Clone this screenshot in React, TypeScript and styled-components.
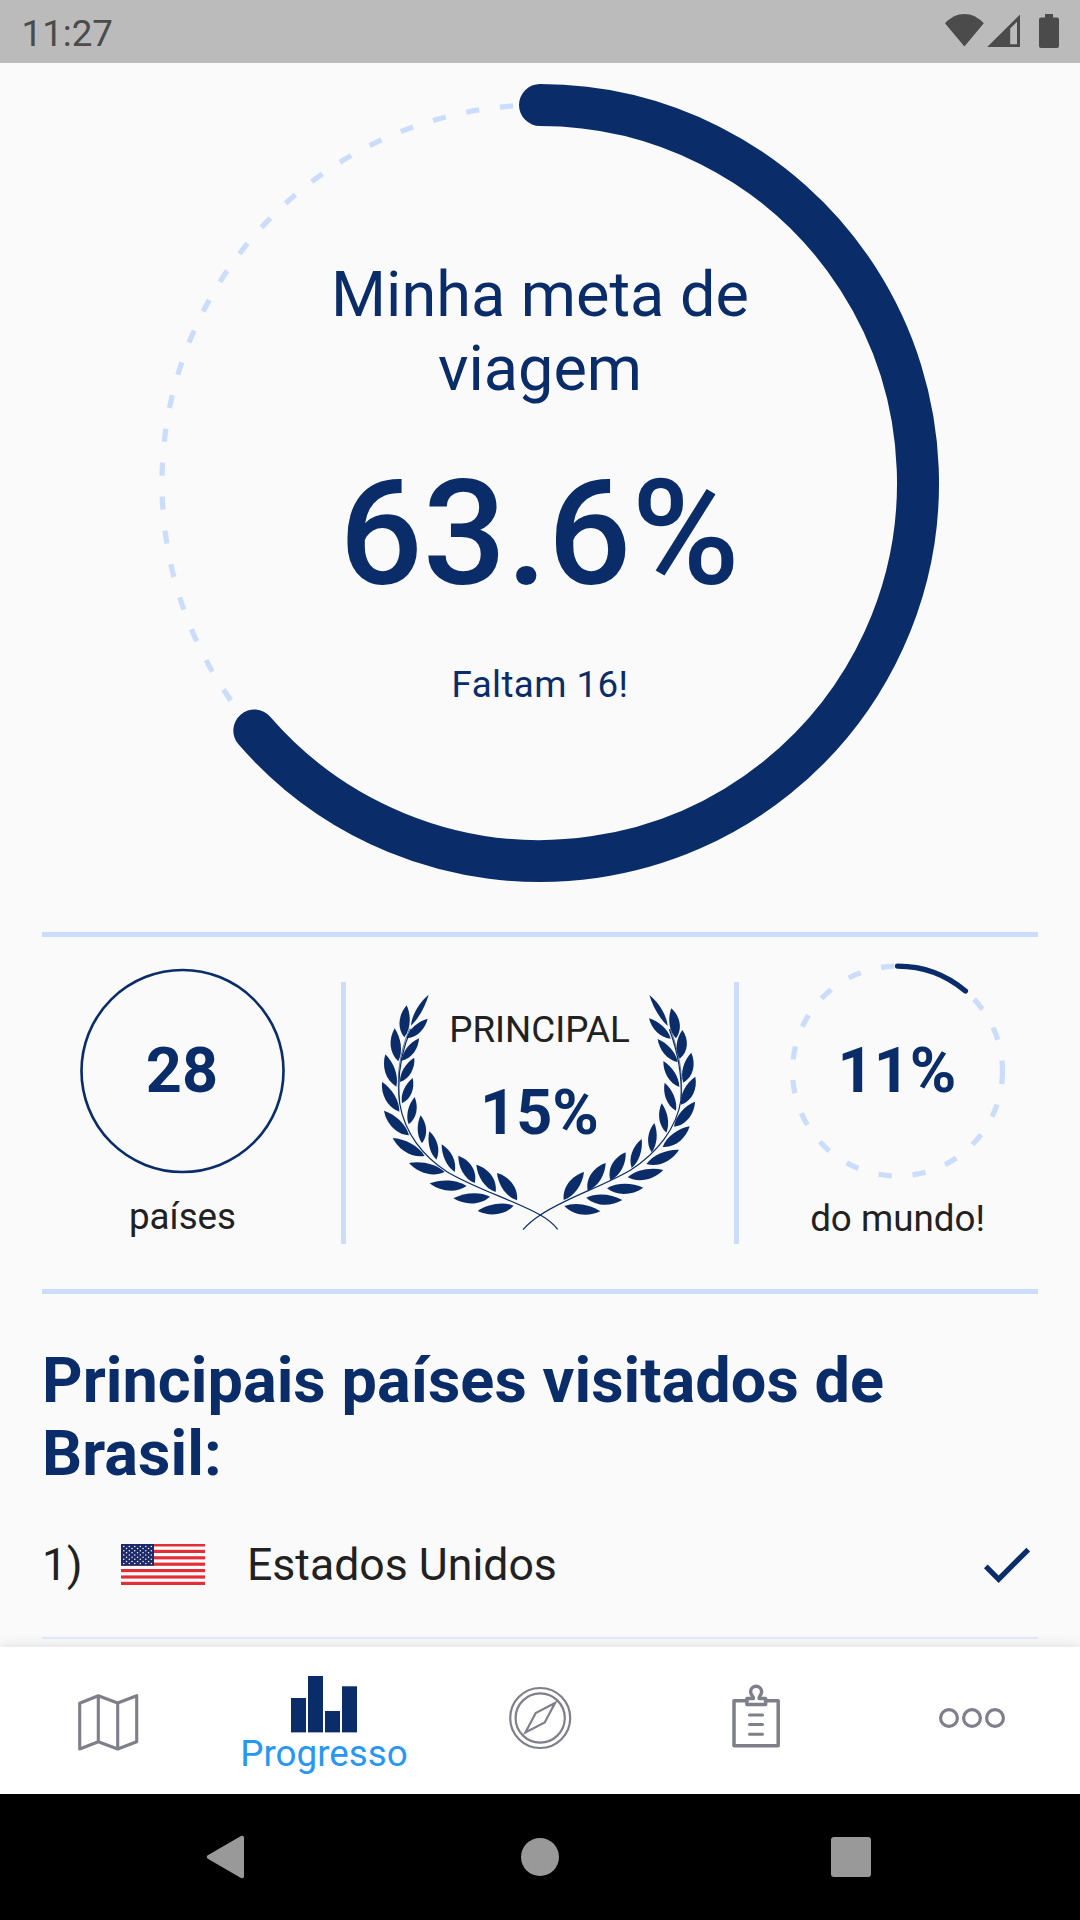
import React from "react";
import styled, { createGlobalStyle } from "styled-components";

const NAVY = "#0a2d69";
const PALE = "#cbddfb";
const INK = "#212121";
const ICON = "#7f7f8b";

const GlobalStyle = createGlobalStyle`
  * { box-sizing: border-box; }
  html, body { margin: 0; padding: 0; }
  body { background: #fafafa; font-family: Roboto, "Liberation Sans", sans-serif; }
  svg { display: block; flex: none; overflow: visible; }
`;

const Screen = styled.div`
  width: 1080px;
  height: 1920px;
  display: flex;
  flex-direction: column;
  overflow: hidden;
  background: #fafafa;
`;

const StatusBar = styled.header`
  height: 63px;
  flex: none;
  display: flex;
  align-items: flex-start;
  justify-content: space-between;
  padding: 12px 21px 0 21.5px;
  background: #bbbbbb;
`;

const StatusIcons = styled.div`
  display: flex;
  padding-top: 2px;
`;

const Content = styled.main`
  flex: 1;
  min-height: 0;
  padding: 21px 42px 0;
  overflow: hidden;
`;

const Label = styled.div<{ $size: number; $line: number; $weight?: number; $color?: string; $spacing?: number }>`
  font-size: ${(p) => p.$size}px;
  line-height: ${(p) => p.$line}px;
  font-weight: ${(p) => p.$weight ?? 400};
  color: ${(p) => p.$color ?? INK};
  letter-spacing: ${(p) => p.$spacing ?? 0}px;
  white-space: nowrap;
`;

const Stack = styled.div<{ $w: number; $h: number }>`
  width: ${(p) => p.$w}px;
  height: ${(p) => p.$h}px;
  display: grid;
  grid-template: 100% / 100%;
  & > * { grid-area: 1 / 1; }
`;

const GoalRing = styled(Stack)`
  margin: 0 auto;
`;

const GoalText = styled.div`
  display: flex;
  flex-direction: column;
  align-items: center;
  text-align: center;
  padding-top: 174px;
`;

const GoalNumber = styled.div`
  padding: 42px 1px 43px 0;
`;

const Rule = styled.div<{ $top: number }>`
  height: 5px;
  margin-top: ${(p) => p.$top}px;
  background: ${PALE};
`;

const Stats = styled.section`
  height: 352px;
  display: flex;
`;

const StatColumn = styled.div<{ $width: number; $top: number }>`
  width: ${(p) => p.$width}px;
  padding-top: ${(p) => p.$top}px;
  display: flex;
  flex-direction: column;
  align-items: center;
`;

const VRule = styled.div<{ $left?: number; $right?: number }>`
  width: 5px;
  height: 262px;
  margin: 45px ${(p) => p.$right ?? 0}px 0 ${(p) => p.$left ?? 0}px;
  background: ${PALE};
`;

const Centered = styled.div`
  display: flex;
  align-items: center;
  justify-content: center;
`;

const StatCaption = styled.div<{ $gap: number }>`
  padding: ${(p) => p.$gap}px 0 0 1px;
`;

const LaurelText = styled.div`
  display: flex;
  flex-direction: column;
  align-items: center;
  gap: 25px;
  padding: 48px 1px 0 0;
`;

const Heading = styled.h2`
  margin: 50px 0 0;
  font-size: 63px;
  line-height: 73px;
  font-weight: 700;
  letter-spacing: 0.04px;
  color: ${NAVY};
`;

const CountryRow = styled.div`
  height: 149px;
  display: flex;
  align-items: center;
  padding-top: 2px;
  border-bottom: 2px solid #e0eafa;
`;

const Rank = styled.div`
  width: 79px;
`;

const CountryName = styled.div`
  flex: 1;
  padding-left: 42px;
`;

const TabBar = styled.nav`
  height: 147px;
  flex: none;
  display: flex;
  background: #ffffff;
  box-shadow: 0 -2px 12px rgba(0, 0, 0, 0.1);
  position: relative;
`;

const Tab = styled.div`
  width: 216px;
  display: flex;
  flex-direction: column;
  align-items: center;
  justify-content: center;
  padding-bottom: 5px;
`;

const ActiveTab = styled(Tab)`
  justify-content: flex-start;
  padding: 29px 0 0;
`;

const SystemBar = styled.footer`
  height: 126px;
  flex: none;
  display: grid;
  grid-template-columns: repeat(3, 312px);
  place-content: center;
  justify-items: center;
  align-items: center;
  background: #000;
`;

type Leaf = [number, number, number, number];

/* tip x, tip y, base x, base y */
const leftOuter: Leaf[] = [
  [140, 136, 133, 232], [104, 205, 115, 304], [76, 283, 109, 380], [66, 366, 118, 455],
  [72, 452, 147, 526], [98, 534, 194, 588], [147, 609, 254, 636], [209, 670, 320, 678],
  [280, 715, 390, 710], [353, 753, 461, 737],
];
const leftInner: Leaf[] = [
  [203, 176, 139, 235], [177, 235, 125, 302], [163, 293, 120, 366], [158, 354, 126, 430],
  [164, 411, 146, 493], [182, 466, 186, 550], [208, 514, 229, 599], [245, 553, 284, 636],
  [295, 587, 344, 669], [349, 614, 407, 696], [411, 639, 471, 721],
];
const rightOuter: Leaf[] = [
  [934, 145, 948, 235], [967, 210, 959, 296], [994, 278, 970, 368], [1006, 350, 963, 434],
  [1005, 425, 942, 500], [989, 499, 908, 561], [957, 569, 859, 612], [910, 630, 803, 652],
  [850, 683, 741, 685], [787, 720, 679, 713], [721, 754, 613, 738],
];
const rightInner: Leaf[] = [
  [867, 175, 932, 236], [893, 237, 953, 306], [910, 303, 958, 381], [914, 368, 948, 452],
  [905, 430, 919, 518], [883, 489, 875, 577], [845, 537, 815, 624], [797, 577, 751, 661],
  [737, 609, 683, 692], [672, 636, 611, 720],
];

/* A pointed leaf; `a` and `b` are how far each edge swells from the mid line. */
function leafPath([tx, ty, bx, by]: Leaf, a: number, b: number) {
  const dx = bx - tx;
  const dy = by - ty;
  const len = Math.hypot(dx, dy);
  const nx = -dy / len;
  const ny = dx / len;
  const at = (t: number, o: number) => `${(tx + dx * t + nx * o).toFixed(1)} ${(ty + dy * t + ny * o).toFixed(1)}`;
  return `M${tx} ${ty}C${at(0.3, a * 1.05)} ${at(0.72, a * 1.2)} ${bx} ${by}C${at(0.72, -b * 1.2)} ${at(0.3, -b * 1.05)} ${tx} ${ty}Z`;
}

function Laurel() {
  return (
    <svg width="360" height="290" viewBox="0 0 1080 870" fill={NAVY}>
      <path d={leafPath([206, 104, 153, 197], 12, 8)} />
      <path d={leafPath([868, 105, 923, 198], 8, 12)} />
      {leftOuter.map((l, i) => <path key={"lo" + i} d={leafPath(l, 21, 15)} />)}
      {leftInner.map((l, i) => <path key={"li" + i} d={leafPath(l, i > 7 ? 17 : 13, i > 7 ? 22 : 17)} />)}
      {rightOuter.map((l, i) => <path key={"ro" + i} d={leafPath(l, 15, 21)} />)}
      {rightInner.map((l, i) => <path key={"ri" + i} d={leafPath(l, i > 6 ? 22 : 17, i > 6 ? 17 : 13)} />)}
      <g fill="none" stroke={NAVY} strokeLinecap="butt">
        <path d="M149 206C118 280 108 352 119 430" strokeWidth="2" />
        <path d="M153 208C119 284 111 352 119 430C134 520 190 590 262 636C350 688 455 718 541 765C562 777 580 791 593 808" strokeWidth="3.6" />
        <path d="M931 206C958 280 970 345 963 420" strokeWidth="2" />
        <path d="M928 208C955 280 967 345 963 420C950 505 890 580 812 630C728 680 620 712 541 765C521 778 504 792 489 809" strokeWidth="3.6" />
      </g>
    </svg>
  );
}

function arc(cx: number, cy: number, r: number, fraction: number) {
  const a = fraction * Math.PI * 2;
  return `M${cx} ${cy - r}A${r} ${r} 0 ${fraction > 0.5 ? 1 : 0} 1 ${cx + r * Math.sin(a)} ${cy - r * Math.cos(a)}`;
}

function Flag() {
  const stars = [];
  for (let row = 0; row < 9; row++) {
    const odd = row % 2;
    for (let c = 0; c < 6 - odd; c++) {
      stars.push(<circle key={`${row}-${c}`} cx={2.8 + odd * 2.75 + c * 5.5} cy={2.4 + row * 2.15} r="0.75" />);
    }
  }
  return (
    <svg width="84" height="41" viewBox="0 0 84 41">
      <rect width="84" height="41" fill="#fff" />
      {[0, 1, 2, 3, 4, 5, 6].map((i) => (
        <rect key={i} y={i === 0 ? 0 : i * 6.4 - 0.6} width="84" height={i === 0 ? 2.5 : 3.2} fill="#e32d37" />
      ))}
      <rect width="33" height="21.7" fill="#1c2a6b" />
      <g fill="#fff">{stars}</g>
    </svg>
  );
}

function IconBox({ children }: { children: React.ReactNode }) {
  return (
    <svg width="72" height="72" viewBox="0 0 72 72" fill="none" stroke={ICON} strokeLinejoin="round" strokeLinecap="round">
      {children}
    </svg>
  );
}

export default function App() {
  return (
    <Screen>
      <GlobalStyle />
      <StatusBar>
        <Label $size={36.75} $line={43} $color="#4b4b4b">11:27</Label>
        <StatusIcons>
          <svg width="114" height="34" viewBox="0 0 114 34" fill="#4b4b4b">
            <path d="M0 9.3C11.5-3.1 27.300-3.1 38.800 9.300L19.400 32.500Z" />
            <path fillRule="evenodd" d="M42.200 33L75 0.500V33ZM65.200 14.500V30.300H72V7.800Z" />
            <path d="M100 0H108V3.500H112Q114 3.500 114 5.500V32Q114 34 112 34H96Q94 34 94 32V5.500Q94 3.500 96 3.500H100Z" />
          </svg>
        </StatusIcons>
      </StatusBar>

      <Content>
        <GoalRing $w={798} $h={798}>
          <svg width="798" height="798" fill="none">
            <circle cx="399" cy="399" r="378" stroke={PALE} strokeWidth="5.25" strokeDasharray="13.125 21" />
            <path d={arc(399, 399, 378, 28 / 44)} stroke={NAVY} strokeWidth="42" strokeLinecap="round" />
          </svg>
          <GoalText>
            <Label $size={63} $line={74} $color={NAVY}>Minha meta de<br />viagem</Label>
            <GoalNumber>
              <Label $size={147} $line={172} $weight={500} $color={NAVY} $spacing={0.2}>63.6%</Label>
            </GoalNumber>
            <Label $size={36.75} $line={43} $color={NAVY} $spacing={0.42}>Faltam 16!</Label>
          </GoalText>
        </GoalRing>

        <Rule $top={50} />
        <Stats>
          <StatColumn $width={280} $top={29}>
            <Stack $w={210} $h={210}>
              <svg width="210" height="210">
                <circle cx="105.500" cy="105" r="101" fill="none" stroke={NAVY} strokeWidth="2.625" />
              </svg>
              <Centered>
                <Label $size={63} $line={74} $weight={700} $color={NAVY}>28</Label>
              </Centered>
            </Stack>
            <StatCaption $gap={19}>
              <Label $size={36.75} $line={43}>países</Label>
            </StatCaption>
          </StatColumn>
          <VRule $left={19} />
          <StatColumn $width={388} $top={23}>
            <Stack $w={360} $h={290}>
              <Laurel />
              <LaurelText>
                <Label $size={36.75} $line={43}>PRINCIPAL</Label>
                <Label $size={63} $line={74} $weight={700} $color={NAVY}>15%</Label>
              </LaurelText>
            </Stack>
          </StatColumn>
          <VRule $right={17} />
          <StatColumn $width={282} $top={29}>
            <Stack $w={210} $h={210}>
              <svg width="210" height="210" fill="none">
                <circle cx="105.500" cy="105" r="105" stroke={PALE} strokeWidth="5.25" strokeDasharray="13.125 21" />
                <path d={arc(105.5, 105, 105, 0.112)} stroke={NAVY} strokeWidth="5.25" strokeLinecap="round" />
              </svg>
              <Centered>
                <Label $size={63} $line={74} $weight={700} $color={NAVY}>11%</Label>
              </Centered>
            </Stack>
            <StatCaption $gap={21}>
              <Label $size={36.75} $line={43}>do mundo!</Label>
            </StatCaption>
          </StatColumn>
        </Stats>
        <Rule $top={0} />

        <Heading>Principais países visitados de Brasil:</Heading>
        <CountryRow>
          <Rank>
            <Label $size={44.6} $line={52}>1)</Label>
          </Rank>
          <Flag />
          <CountryName>
            <Label $size={44.6} $line={52}>Estados Unidos</Label>
          </CountryName>
          <svg width="63" height="63" viewBox="0 0 24 24" fill={NAVY}>
            <path d="M9 16.17L4.83 12l-1.42 1.41L9 19 21 7l-1.41-1.41z" />
          </svg>
        </CountryRow>
      </Content>

      <TabBar>
        <Tab>
          <IconBox>
            <path d="M7.700 21.300L26.300 13.700L45.700 21L64.700 13.700V59.700L45.700 67L26.300 59.700L7.700 67ZM26.300 13.700V59.700M45.700 21V67" strokeWidth="3.100" />
          </IconBox>
        </Tab>
        <ActiveTab>
          <svg width="66" height="56" viewBox="0 0 66 56" fill={NAVY}>
            <rect x="0" y="22" width="15" height="34.400" />
            <rect x="17" y="0" width="15" height="56.400" />
            <rect x="34" y="35" width="15" height="21.400" />
            <rect x="51" y="10.300" width="15" height="46.100" />
          </svg>
          <Label $size={36.75} $line={43} $color="#2697f3">Progresso</Label>
        </ActiveTab>
        <Tab>
          <IconBox>
            <g strokeWidth="2.2" strokeLinejoin="miter">
              <circle cx="36.200" cy="36" r="30" />
              <circle cx="36.200" cy="36" r="24.600" />
              <path d="M51 21L31.700 31L21.400 50.500L40.700 40.500Z" />
            </g>
          </IconBox>
        </Tab>
        <Tab>
          <IconBox>
            <g strokeWidth="3.500">
              <path d="M26.700 18.700H14V63.700H58.200V18.700H46" />
              <path d="M33.300 16.500H26.900V22.500H45.600V16.500H39.300" />
              <path d="M33.300 16.300C33.700 14.200 30.600 13.400 30.600 9.800A5.500 5.500 0 0 1 41.600 9.800C41.600 13.400 38.700 14.200 39.300 16.300" />
              <path d="M29.500 33H42.500M29.500 42.500H42.500M29.500 52.300H42.500" strokeWidth="3" />
            </g>
          </IconBox>
        </Tab>
        <Tab>
          <IconBox>
            <g strokeWidth="3.200">
              <circle cx="13" cy="36" r="8.400" />
              <circle cx="36" cy="36" r="8.400" />
              <circle cx="59" cy="36" r="8.400" />
            </g>
          </IconBox>
        </Tab>
      </TabBar>

      <SystemBar>
        <svg width="42" height="42" viewBox="0 0 42 42" fill="#999" stroke="#999" strokeWidth="4" strokeLinejoin="round">
          <path d="M1.800 21L35 1.800V40.200Z" />
        </svg>
        <svg width="40" height="40" viewBox="0 0 40 40" fill="#999">
          <circle cx="20" cy="20" r="19" />
        </svg>
        <svg width="40" height="40" viewBox="0 0 40 40" fill="#999">
          <rect x="-1" y="0" width="40" height="40" rx="3" />
        </svg>
      </SystemBar>
    </Screen>
  );
}
